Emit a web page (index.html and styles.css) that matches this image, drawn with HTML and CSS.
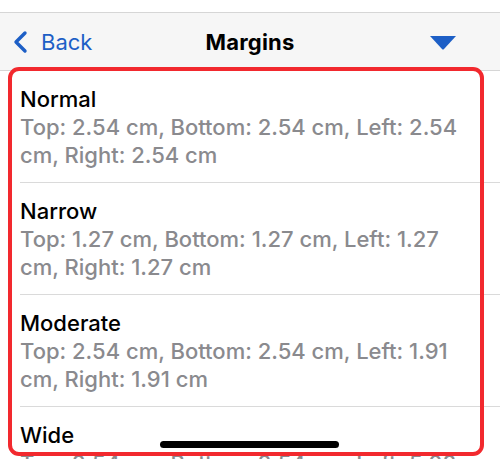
FILE: index.html
```html
<!DOCTYPE html>
<html lang="en">
<head>
  <meta charset="UTF-8">
  <meta name="viewport" content="width=device-width, initial-scale=1.0">
  <title>Margins</title>
  <link rel="stylesheet" href="styles.css">
</head>
<body>
<div class="screen">
  <!-- Nav bar -->
  <div class="nav-bar">
    <div class="nav-back">
      <svg class="chevron" width="16" height="24" viewBox="0 0 16 24">
        <path d="M13 3 L4 12 L13 21" fill="none" stroke="#1d5fc6" stroke-width="3.4" stroke-linecap="round" stroke-linejoin="round"/>
      </svg>
      <span>Back</span>
    </div>
    <div class="nav-title">Margins</div>
    <div class="nav-action">
      <svg width="26" height="14" viewBox="0 0 26 14">
        <path d="M0 0 H26 L14 13 Q13 14 12 13 Z" fill="#1d5fc6"/>
      </svg>
    </div>
  </div>

  <!-- Margin list -->
  <div class="margin-list">
    <div class="margin-item">
      <div class="item-title">Normal</div>
      <div class="item-detail">Top: 2.54 cm, Bottom: 2.54 cm, Left: 2.54<br>cm, Right: 2.54 cm</div>
    </div>
    <div class="margin-item">
      <div class="item-title">Narrow</div>
      <div class="item-detail">Top: 1.27 cm, Bottom: 1.27 cm, Left: 1.27<br>cm, Right: 1.27 cm</div>
    </div>
    <div class="margin-item">
      <div class="item-title">Moderate</div>
      <div class="item-detail">Top: 2.54 cm, Bottom: 2.54 cm, Left: 1.91<br>cm, Right: 1.91 cm</div>
    </div>
    <div class="margin-item">
      <div class="item-title">Wide</div>
      <div class="item-detail">Top: 2.54 cm, Bottom: 2.54 cm, Left: 5.08<br>cm, Right: 5.08 cm</div>
    </div>
  </div>

  <!-- Annotation + home indicator -->
  <div class="highlight-box"></div>
  <div class="home-indicator"></div>
</div>
</body>
</html>
```

FILE: styles.css
```css
* {
  margin: 0;
  padding: 0;
  box-sizing: border-box;
}

body {
  font-family: 'Inter', 'Roboto', sans-serif;
  background-color: #ffffff;
  color: #000;
}

.screen {
  position: relative;
  width: 500px;
  height: 459px;
  overflow: hidden;
  padding-top: 12px;
}

/* Nav bar */
.nav-bar {
  height: 59px;
  background-color: #f6f6f6;
  border-top: 1px solid #d6d6d6;
  border-bottom: 1px solid #d6d6d6;
  display: grid;
  grid-template-columns: 1fr auto 1fr;
  align-items: center;
  padding: 0 12px;
}

.nav-back {
  display: flex;
  align-items: center;
  gap: 13px;
  color: #1d5fc6;
  font-size: 22px;
}

.nav-title {
  font-size: 22px;
  font-weight: 700;
  letter-spacing: 0.2px;
}

.nav-action {
  display: flex;
  justify-content: flex-end;
  padding: 2px 32px 0 0;
}

/* List */
.margin-list {
  padding-left: 20px;
}

.margin-item {
  padding: 14px 0 13px;
  border-bottom: 1px solid #dadada;
  white-space: nowrap;
}

.item-title {
  font-size: 22px;
  line-height: 28px;
  font-weight: 500;
}

.item-detail {
  font-size: 22px;
  line-height: 28px;
  font-weight: 500;
  color: #8a8a8e;
}

/* Red annotation frame */
.highlight-box {
  position: absolute;
  left: 8px;
  top: 67px;
  width: 476px;
  height: 389px;
  border: 4px solid #f2292e;
  border-radius: 11px;
}

.home-indicator {
  position: absolute;
  left: 160px;
  top: 441px;
  width: 179px;
  height: 7px;
  border-radius: 4px;
  background-color: #000;
}
```
